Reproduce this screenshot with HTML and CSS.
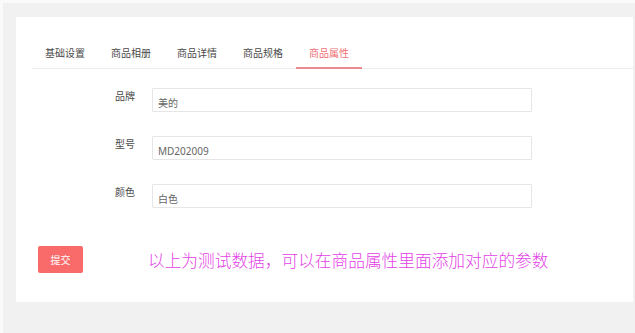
FILE: index.html
```html
<!DOCTYPE html>
<html lang="zh-CN">
<head>
    <meta charset="UTF-8">
    <meta name="viewport" content="width=device-width, initial-scale=1.0">
    <title>商品属性</title>
    <link rel="stylesheet" href="styles.css">
</head>
<body>

    <div class="page">
        <div class="card">

            <!-- 选项卡 -->
            <ul class="tabs">
                <li class="tab">基础设置</li>
                <li class="tab">商品相册</li>
                <li class="tab">商品详情</li>
                <li class="tab">商品规格</li>
                <li class="tab active">商品属性</li>
            </ul>

            <!-- 商品属性表单 -->
            <div class="form">
                <div class="form-row">
                    <label class="form-label">品牌</label>
                    <input class="form-input" type="text" value="美的">
                </div>
                <div class="form-row">
                    <label class="form-label">型号</label>
                    <input class="form-input" type="text" value="MD202009">
                </div>
                <div class="form-row">
                    <label class="form-label">颜色</label>
                    <input class="form-input" type="text" value="白色">
                </div>
            </div>

            <div class="actions">
                <button class="submit-btn">提交</button>
                <span class="note">以上为测试数据，可以在商品属性里面添加对应的参数</span>
            </div>

        </div>
    </div>

</body>
</html>
```

FILE: styles.css
```css
body {
    margin: 0;
    padding: 3px 0 0 3px;
    background-color: #fafafa;
    font-family: "Noto Sans", "Noto Sans CJK SC", sans-serif;
    font-size: 10px;
    color: #555;
}

.page {
    background-color: #f1f1f1;
    padding: 14px 2px 31px 13px;
}

.card {
    background-color: #fff;
    padding: 21px 0 29px 16px;
}

/* 选项卡 */
.tabs {
    list-style: none;
    margin: 0;
    padding: 0;
    display: flex;
    border-bottom: 1px solid #ececec;
}

.tab {
    width: 66px;
    text-align: center;
    line-height: 16px;
    padding: 7px 0 6px;
    border-bottom: 2px solid transparent;
    margin-bottom: -1px;
    color: #4a4a4a;
    cursor: pointer;
}

.tab.active {
    color: #ef6f74;
    border-bottom-color: #ea8a8e;
}

/* 表单 */
.form {
    display: flex;
    flex-direction: column;
    gap: 24px;
    margin-top: 19px;
}

.form-row {
    display: flex;
    align-items: flex-start;
    gap: 17px;
}

.form-label {
    width: 103px;
    text-align: right;
    line-height: 16px;
    color: #4a4a4a;
}

.form-input {
    box-sizing: border-box;
    width: 380px;
    height: 24px;
    margin: 0;
    padding: 5px 5px 0;
    border: 1px solid #e6e6e6;
    border-radius: 1px;
    font-family: "Noto Sans", "Noto Sans CJK SC", sans-serif;
    font-size: 10px;
    color: #666;
    outline: none;
}

/* 提交 */
.actions {
    display: flex;
    align-items: center;
    margin-top: 38px;
    padding-left: 6px;
}

.submit-btn {
    width: 45px;
    height: 27px;
    padding: 0;
    border: none;
    border-radius: 2px;
    background-color: #f96a6a;
    color: #fff;
    font-family: "Noto Sans", "Noto Sans CJK SC", sans-serif;
    font-size: 10px;
    cursor: pointer;
}

.note {
    margin-left: 65px;
    font-family: "Noto Sans CJK SC", sans-serif;
    font-size: 16.7px;
    font-weight: 300;
    color: #e33fe6;
    line-height: 20px;
}
```
